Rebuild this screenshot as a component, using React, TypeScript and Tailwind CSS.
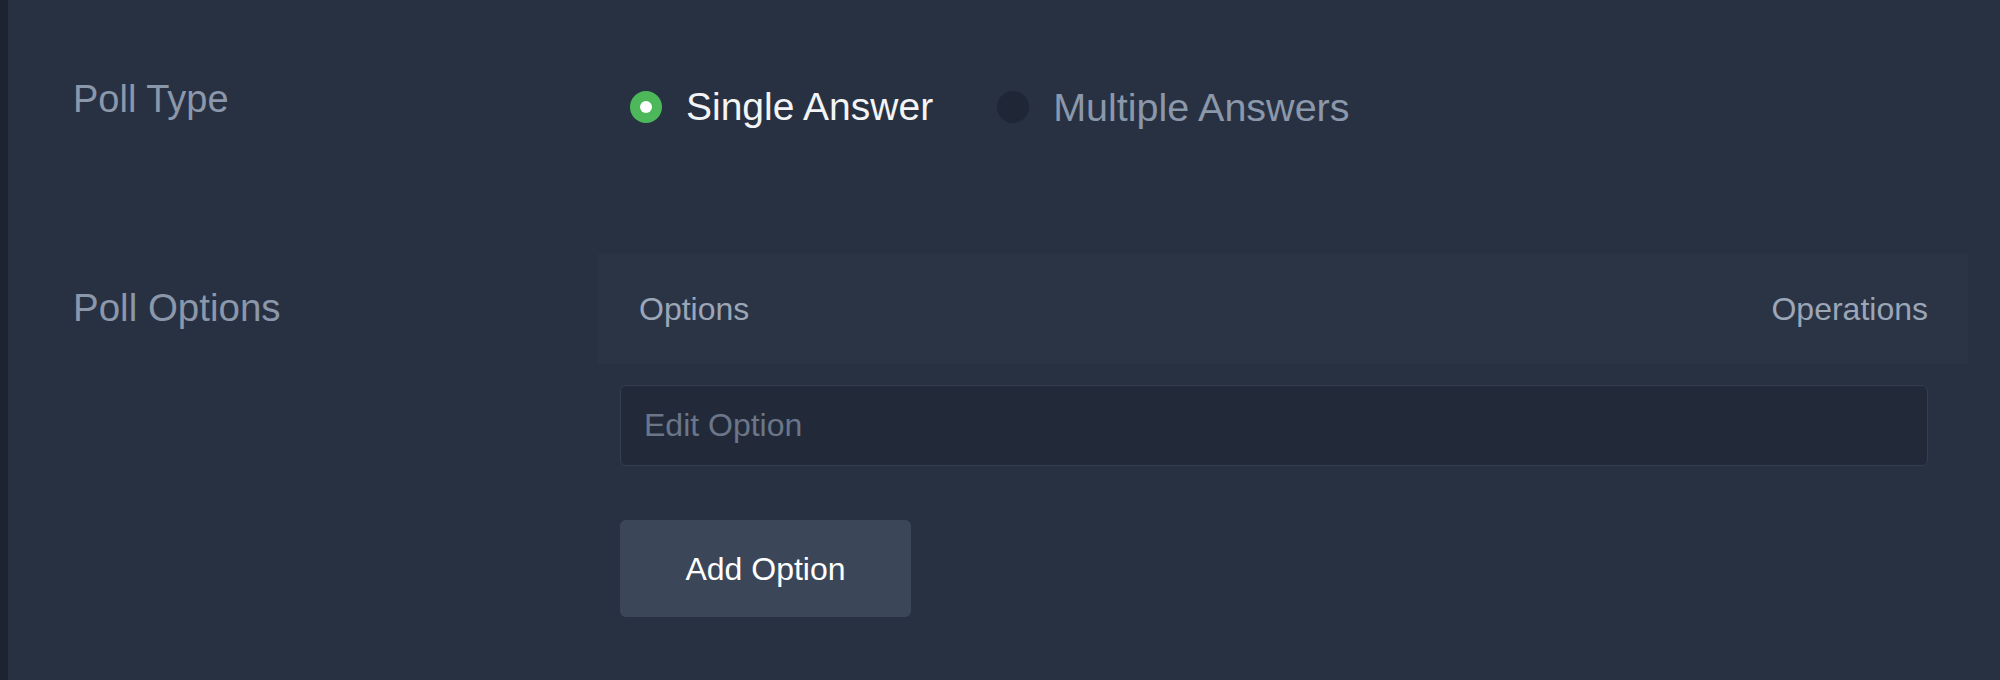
import { useState } from "react";

const PollSettings = () => {
  const [pollType, setPollType] = useState<"single" | "multiple">("single");
  const [option, setOption] = useState("");

  return (
    <div className="flex min-h-[680px] bg-[#283142] font-['Liberation_Sans',Arial,sans-serif]">
      <div className="w-[8px] shrink-0 bg-[#1d2330]" />
      <div className="flex-1 pl-[65px] pr-[32px]">
        {/* Poll Type */}
        <div className="flex pt-[77px]">
          <div className="w-[525px] shrink-0 text-[38px] leading-[44px] text-[#8b97aa]">
            Poll Type
          </div>
          <div className="mt-[8px] flex h-[44px] items-center pl-[32px]">
            <button
              onClick={() => setPollType("single")}
              className="flex items-center gap-[24px]"
            >
              <span
                className={
                  pollType === "single"
                    ? "flex h-[32px] w-[32px] items-center justify-center rounded-full bg-[#4cb85a]"
                    : "flex h-[32px] w-[32px] items-center justify-center rounded-full bg-[#1f2636]"
                }
              >
                {pollType === "single" && (
                  <span className="h-[12px] w-[12px] rounded-full bg-white" />
                )}
              </span>
              <span
                className={
                  pollType === "single"
                    ? "text-[39px] leading-[44px] text-[#f3f4f6]"
                    : "text-[39px] leading-[44px] text-[#8b97aa]"
                }
              >
                Single Answer
              </span>
            </button>
            <button
              onClick={() => setPollType("multiple")}
              className="ml-[64px] flex items-center gap-[24px]"
            >
              <span
                className={
                  pollType === "multiple"
                    ? "flex h-[32px] w-[32px] items-center justify-center rounded-full bg-[#4cb85a]"
                    : "flex h-[32px] w-[32px] items-center justify-center rounded-full bg-[#1f2636]"
                }
              >
                {pollType === "multiple" && (
                  <span className="h-[12px] w-[12px] rounded-full bg-white" />
                )}
              </span>
              <span
                className={
                  pollType === "multiple"
                    ? "text-[39.5px] leading-[44px] text-[#f3f4f6]"
                    : "text-[39.5px] leading-[44px] text-[#8b97aa]"
                }
              >
                Multiple Answers
              </span>
            </button>
          </div>
        </div>

        {/* Poll Options */}
        <div className="mt-[125px] flex">
          <div className="mt-[32px] w-[525px] shrink-0 text-[38.5px] leading-[44px] text-[#8b97aa]">
            Poll Options
          </div>
          <div className="flex-1">
            <div className="flex h-[110px] items-center justify-between bg-[#2a3445] pl-[41px] pr-[40px] text-[32px] text-[#9ba6b7]">
              <span>Options</span>
              <span>Operations</span>
            </div>
            <div className="pl-[22px] pr-[40px] pt-[21px]">
              <input
                value={option}
                onChange={(e) => setOption(e.target.value)}
                placeholder="Edit Option"
                className="h-[81px] w-full rounded-[6px] border border-[#343e4f] bg-[#222a3a] px-[23px] text-[32px] text-[#e5e7eb] outline-none placeholder:text-[#6b7689]"
              />
              <button className="mt-[54px] h-[97px] w-[291px] rounded-[6px] bg-[#3b4759] text-[32px] text-white">
                Add Option
              </button>
            </div>
          </div>
        </div>
      </div>
    </div>
  );
};

export default function App() {
  return <PollSettings />;
}
